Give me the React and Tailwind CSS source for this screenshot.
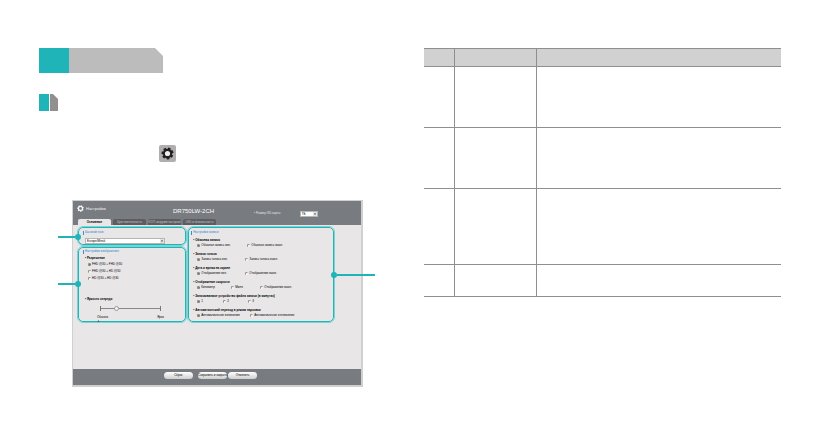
const recordGroups = [
  {
    title: "Обычная запись",
    name: "normal",
    checked: 0,
    options: [
      { label: "Обычная запись вкл.", width: "w-[50px]" },
      { label: "Обычная запись выкл.", width: "w-auto" },
    ],
  },
  {
    title: "Запись голоса",
    name: "voice",
    checked: 0,
    options: [
      { label: "Запись голоса вкл.", width: "w-[48px]" },
      { label: "Запись голоса выкл.", width: "w-auto" },
    ],
  },
  {
    title: "Дата и время на экране",
    name: "date",
    checked: 0,
    options: [
      { label: "Отображение вкл.", width: "w-[48px]" },
      { label: "Отображение выкл.", width: "w-auto" },
    ],
  },
  {
    title: "Отображение скорости",
    name: "speed",
    checked: 0,
    options: [
      { label: "Километр", width: "w-[34px]" },
      { label: "Миля", width: "w-[29px]" },
      { label: "Отображение выкл.", width: "w-auto" },
    ],
  },
  {
    title: "Записываемое устройство файла записи (в минутах)",
    name: "length",
    checked: 0,
    options: [
      { label: "1", width: "w-[26px]" },
      { label: "2", width: "w-[25px]" },
      { label: "3", width: "w-auto" },
    ],
  },
  {
    title: "Автоматический переход в режим парковки",
    name: "parking",
    checked: 0,
    options: [
      { label: "Автоматическое включение", width: "w-[53px]" },
      { label: "Автоматическое отключение", width: "w-auto" },
    ],
  },
];

const resolutions = ["FHD @30 + FHD @30", "FHD @30 + HD @30", "HD @30 + HD @30"];

const tabs = ["Чувствительность", "VOIT-загрузки настроек", "LED и безопасность"];

const rowHeights = ["h-[61px]", "h-[61px]", "h-[76px]", "h-[32px]"];

function Gear({ className, hole }) {
  return (
    <svg viewBox="0 0 24 24" className={className} aria-hidden="true">
      <g fill="currentColor">
        <circle cx="12" cy="12" r="8.5" />
        {[0, 51, 103, 154, 206, 257, 309].map((angle) => (
          <path key={angle} d="M8.8 6 L9.6 1 H14.4 L15.2 6 Z" transform={`rotate(${angle + 20} 12 12)`} />
        ))}
      </g>
      <circle cx="12" cy="12" r="4.8" fill={hole} />
    </svg>
  );
}

function Radio({ name, label, checked, width = "w-auto" }) {
  return (
    <label className={`flex shrink-0 items-center gap-px whitespace-nowrap ${width}`}>
      <input
        type="radio"
        name={name}
        defaultChecked={checked}
        className="size-[3px] shrink-0 appearance-none rounded-full border-t border-l border-[#8c8c8c] bg-white checked:bg-[#777]"
      />
      {label}
    </label>
  );
}

function SectionTitle({ children }) {
  return (
    <h3 className="flex h-[5px] items-center gap-px text-[#2f87c8]">
      <span className="h-[4px] w-px bg-[#3b8fd0]" />
      {children}
    </h3>
  );
}

function Panel({ className, children }) {
  return (
    <section className={`relative rounded-[5px] border border-[#1eb4b8] outline outline-[#7dd2d4] ${className}`}>
      {children}
    </section>
  );
}

function Leader({ className, side }) {
  return (
    <span className={`absolute flex items-center ${side === "left" ? "flex-row" : "flex-row-reverse"} ${className}`}>
      <span className="h-[2px] flex-1 bg-[#1eb4b8]" />
      <span className="size-[6px] rounded-full bg-[#1eb4b8]" />
    </span>
  );
}

function Select({ label, value, className }) {
  return (
    <span className={`relative block ${className}`}>
      <select
        aria-label={label}
        className="block h-[6px] w-full appearance-none border border-[#b5b5b5] bg-white pl-px text-[3px] leading-[4px] text-black"
      >
        <option>{value}</option>
      </select>
      <svg viewBox="0 0 4 4" className="pointer-events-none absolute top-px right-px size-[4px] bg-[#e4e4e4]" aria-hidden="true">
        <path d="M1 1.5 H3 L2 3 Z" fill="#333" />
      </svg>
    </span>
  );
}

function PillButton({ children, className = "" }) {
  return (
    <button
      type="button"
      className={`h-[7px] w-[29px] rounded-full bg-linear-to-b from-white to-[#cfcfcf] text-center text-[3px] leading-[7px] whitespace-nowrap text-black ${className}`}
    >
      {children}
    </button>
  );
}

function Viewer() {
  return (
    <div className="mr-[47px] ml-[33px] border border-r-2 border-b-2 border-[#d0d0d0] bg-[#e8e6e7] text-[3px] leading-[5px] text-black">
      <header className="bg-[#787b80]">
        <div className="flex h-[18px] items-start pl-[4px] text-[#f4f4f4]">
          <div className="flex w-[96px] items-center gap-[2px] pt-[4px] text-[4px]">
            <Gear className="size-[7px] text-white" hole="#787b80" />
            Настройки
          </div>
          <h2 className="w-[81px] pt-[6px] text-[6px] leading-[8px] whitespace-nowrap text-white">DR750LW-2CH</h2>
          <span className="w-[46px] pt-[10px] whitespace-nowrap text-[#e4e4e4]">• Размер SD-карты</span>
          <Select label="Размер SD-карты" value="ГБ" className="mt-[10px] w-[18px]" />
        </div>
        <nav className="flex h-[6px] gap-[2px] pl-[5px]">
          <button type="button" className="w-[33px] rounded-t-[2px] bg-[#e8e6e7] text-center leading-[6px] font-bold text-black">
            Основные
          </button>
          {tabs.map((tab) => (
            <button
              key={tab}
              type="button"
              className="w-[33px] overflow-hidden rounded-t-[2px] bg-[#5c5d60] text-center leading-[6px] whitespace-nowrap text-[#c4c4c4]"
            >
              {tab}
            </button>
          ))}
        </nav>
      </header>

      <div className="grid grid-cols-[109fr_146fr] gap-[2px] pt-[2px] pr-[27px] pb-[47px] pl-[5px]">
        <div className="flex flex-col gap-[2px]">
          <Panel className="h-[18px] px-[4px] pt-[2px]">
            <SectionTitle>Часовой пояс</SectionTitle>
            <Select label="Часовой пояс" value="Europe/Minsk" className="mt-[3px] ml-[2px] w-[80px]" />
            <Leader side="left" className="top-[6px] left-[-21px] w-[23px]" />
          </Panel>
          <Panel className="h-[75px] px-[4px] pt-px">
            <SectionTitle>Настройки изображения</SectionTitle>
            <fieldset className="mt-[2px] pl-[2px]">
              <legend className="font-bold">• Разрешение</legend>
              <div className="flex flex-col gap-[2px] pt-px pl-[3px]">
                {resolutions.map((text, i) => (
                  <Radio key={text} name="resolution" label={text} checked={i === 0} />
                ))}
              </div>
            </fieldset>
            <label htmlFor="brightness" className="mt-[16px] block pl-[2px] font-bold">
              • Яркость спереди
            </label>
            <div className="ml-[17px] w-[61px]">
              <input
                id="brightness"
                type="range"
                defaultValue="24"
                className="mt-[4px] block h-[5px] w-full appearance-none border-x border-[#777] bg-transparent [&::-webkit-slider-runnable-track]:h-px [&::-webkit-slider-runnable-track]:bg-[#888] [&::-webkit-slider-thumb]:-mt-[2px] [&::-webkit-slider-thumb]:size-[5px] [&::-webkit-slider-thumb]:appearance-none [&::-webkit-slider-thumb]:rounded-full [&::-webkit-slider-thumb]:border [&::-webkit-slider-thumb]:border-[#999] [&::-webkit-slider-thumb]:bg-[#f4f4f4]"
              />
              <div className="-mx-[3px] mt-[4px] flex justify-between">
                <span>Обычно</span>
                <span>Ярко</span>
              </div>
              <svg viewBox="0 0 4 4" className="-ml-[3px] block size-[3px]" aria-hidden="true">
                <path d="M2 0 L4 4 H0 Z" fill="#555" />
              </svg>
            </div>
            <Leader side="left" className="top-[33px] left-[-21px] w-[23px]" />
          </Panel>
        </div>

        <Panel className="h-[95px] px-[2px] pt-[2px]">
          <SectionTitle>Настройки записи</SectionTitle>
          <div className="mt-[3px] flex flex-col gap-[4px] pl-[2px]">
            {recordGroups.map((group) => (
              <fieldset key={group.name}>
                <legend className="font-bold whitespace-nowrap">• {group.title}</legend>
                <div className="flex pl-[4px]">
                  {group.options.map((option, i) => (
                    <Radio
                      key={option.label}
                      name={group.name}
                      label={option.label}
                      width={option.width}
                      checked={i === group.checked}
                    />
                  ))}
                </div>
              </fieldset>
            ))}
          </div>
          <Leader side="right" className="top-[44px] right-[-42px] w-[44px]" />
        </Panel>
      </div>

      <footer className="flex h-[16px] items-start bg-[#787b80] pt-[3px] pl-[91px]">
        <PillButton>Сброс</PillButton>
        <PillButton className="ml-[5px]">Сохранить и закрыть</PillButton>
        <PillButton className="ml-px">Отменить</PillButton>
      </footer>
    </div>
  );
}

export default function App() {
  return (
    <main className="grid min-h-screen grid-cols-2 bg-white pt-[48px] font-['Liberation_Sans',sans-serif]">
      <div className="pl-[39px]">
        <div className="flex h-[25px]">
          <span className="w-[30px] bg-[#1eb4b8]" />
          <span className="w-[94px] bg-[#bcbcbc] [clip-path:polygon(0_0,86px_0,100%_8px,100%_100%,0_100%)]" />
        </div>
        <div className="mt-[21px] flex h-[17px] gap-px">
          <span className="w-[10px] bg-[#1eb4b8]" />
          <span className="w-[8px] bg-[#918f8f] [clip-path:polygon(0_0,3px_0,100%_5px,100%_100%,0_100%)]" />
        </div>
        <button
          type="button"
          aria-label="Настройки"
          className="mt-[34px] mb-[38px] ml-[120px] flex size-[17px] items-center justify-center rounded-[2px] bg-[#b0aeae]"
        >
          <Gear className="size-[13px] text-[#231f20]" hole="#eeeeee" />
        </button>
        <Viewer />
      </div>

      <div className="pr-[38px] pl-[14px]">
        <table className="w-full table-fixed border-collapse border-y border-[#8f8f8f]">
          <thead>
            <tr className="h-[18px] bg-[#d1d1d1]">
              <th className="w-[31px] border-r border-[#8f8f8f]" />
              <th className="w-[82px] border-r border-[#8f8f8f]" />
              <th />
            </tr>
          </thead>
          <tbody>
            {rowHeights.map((height, i) => (
              <tr key={i} className={`border-t border-[#8f8f8f] ${height}`}>
                <td className="border-r border-[#8f8f8f]" />
                <td className="border-r border-[#8f8f8f]" />
                <td />
              </tr>
            ))}
          </tbody>
        </table>
      </div>
    </main>
  );
}
